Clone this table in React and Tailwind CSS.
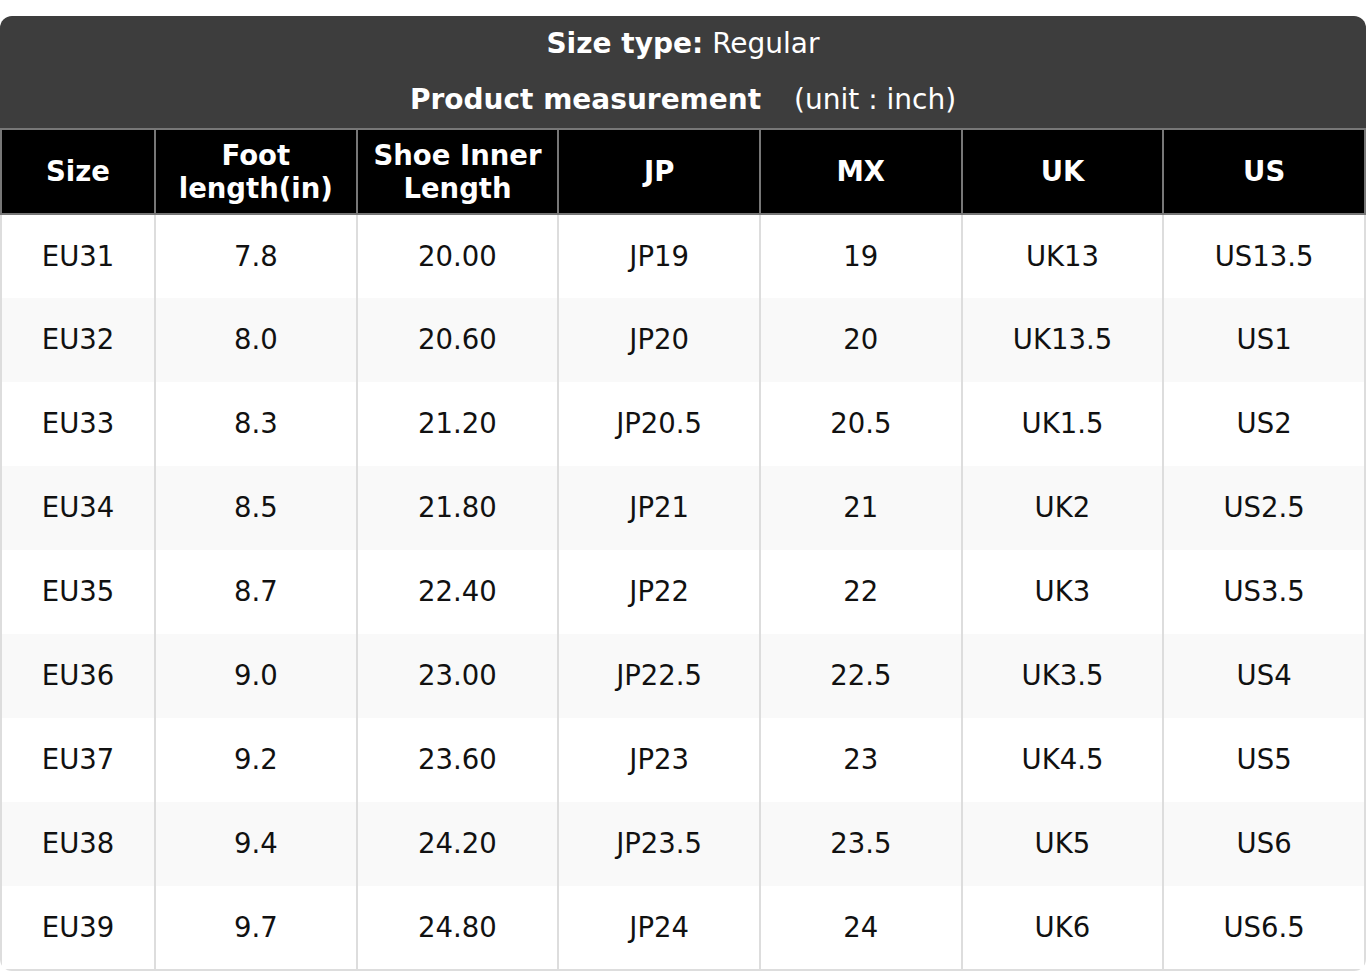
import React from 'react';

const columns = ['Size', 'Foot\nlength(in)', 'Shoe Inner\nLength', 'JP', 'MX', 'UK', 'US'];

const rows = [
  ['EU31', '7.8', '20.00', 'JP19', '19', 'UK13', 'US13.5'],
  ['EU32', '8.0', '20.60', 'JP20', '20', 'UK13.5', 'US1'],
  ['EU33', '8.3', '21.20', 'JP20.5', '20.5', 'UK1.5', 'US2'],
  ['EU34', '8.5', '21.80', 'JP21', '21', 'UK2', 'US2.5'],
  ['EU35', '8.7', '22.40', 'JP22', '22', 'UK3', 'US3.5'],
  ['EU36', '9.0', '23.00', 'JP22.5', '22.5', 'UK3.5', 'US4'],
  ['EU37', '9.2', '23.60', 'JP23', '23', 'UK4.5', 'US5'],
  ['EU38', '9.4', '24.20', 'JP23.5', '23.5', 'UK5', 'US6'],
  ['EU39', '9.7', '24.80', 'JP24', '24', 'UK6', 'US6.5'],
];

const SizeChart = () => {
  return (
    <div className="pt-[16px] bg-white" style={{ fontFamily: '"DejaVu Sans", sans-serif' }}>
      <div className="rounded-t-[12px] bg-[#3d3d3d] text-white text-[28px] text-center">
        <div className="h-[56px] flex items-center justify-center">
          <span className="font-bold">Size type:</span>
          <span className="ml-[9px]">Regular</span>
        </div>
        <div className="h-[56px] flex items-center justify-center">
          <span className="font-bold">Product measurement</span>
          <span className="ml-[33px]">(unit : inch)</span>
        </div>
      </div>

      <div className="rounded-b-[12px] overflow-hidden">
        <table className="w-full table-fixed border-collapse text-[27.5px]">
          <colgroup>
            <col className="w-[154px]" />
            <col />
            <col />
            <col />
            <col />
            <col />
            <col />
          </colgroup>
          <thead>
            <tr>
              {columns.map((col) => (
                <th
                  key={col}
                  className="h-[85px] bg-black text-white font-bold leading-[33px] border-2 border-[#777] whitespace-pre-line text-center"
                >
                  {col}
                </th>
              ))}
            </tr>
          </thead>
          <tbody>
            {rows.map((row, i) => (
              <tr key={row[0]} className={i % 2 === 1 ? 'bg-[#f9f9f9]' : 'bg-white'}>
                {row.map((cell, j) => (
                  <td
                    key={j}
                    className="h-[84px] text-center text-[#111] border-x-2 border-[#ddd] [tr:last-child_&]:border-b-2"
                  >
                    {cell}
                  </td>
                ))}
              </tr>
            ))}
          </tbody>
        </table>
      </div>
    </div>
  );
};

export default function App() {
  return <SizeChart />;
}
